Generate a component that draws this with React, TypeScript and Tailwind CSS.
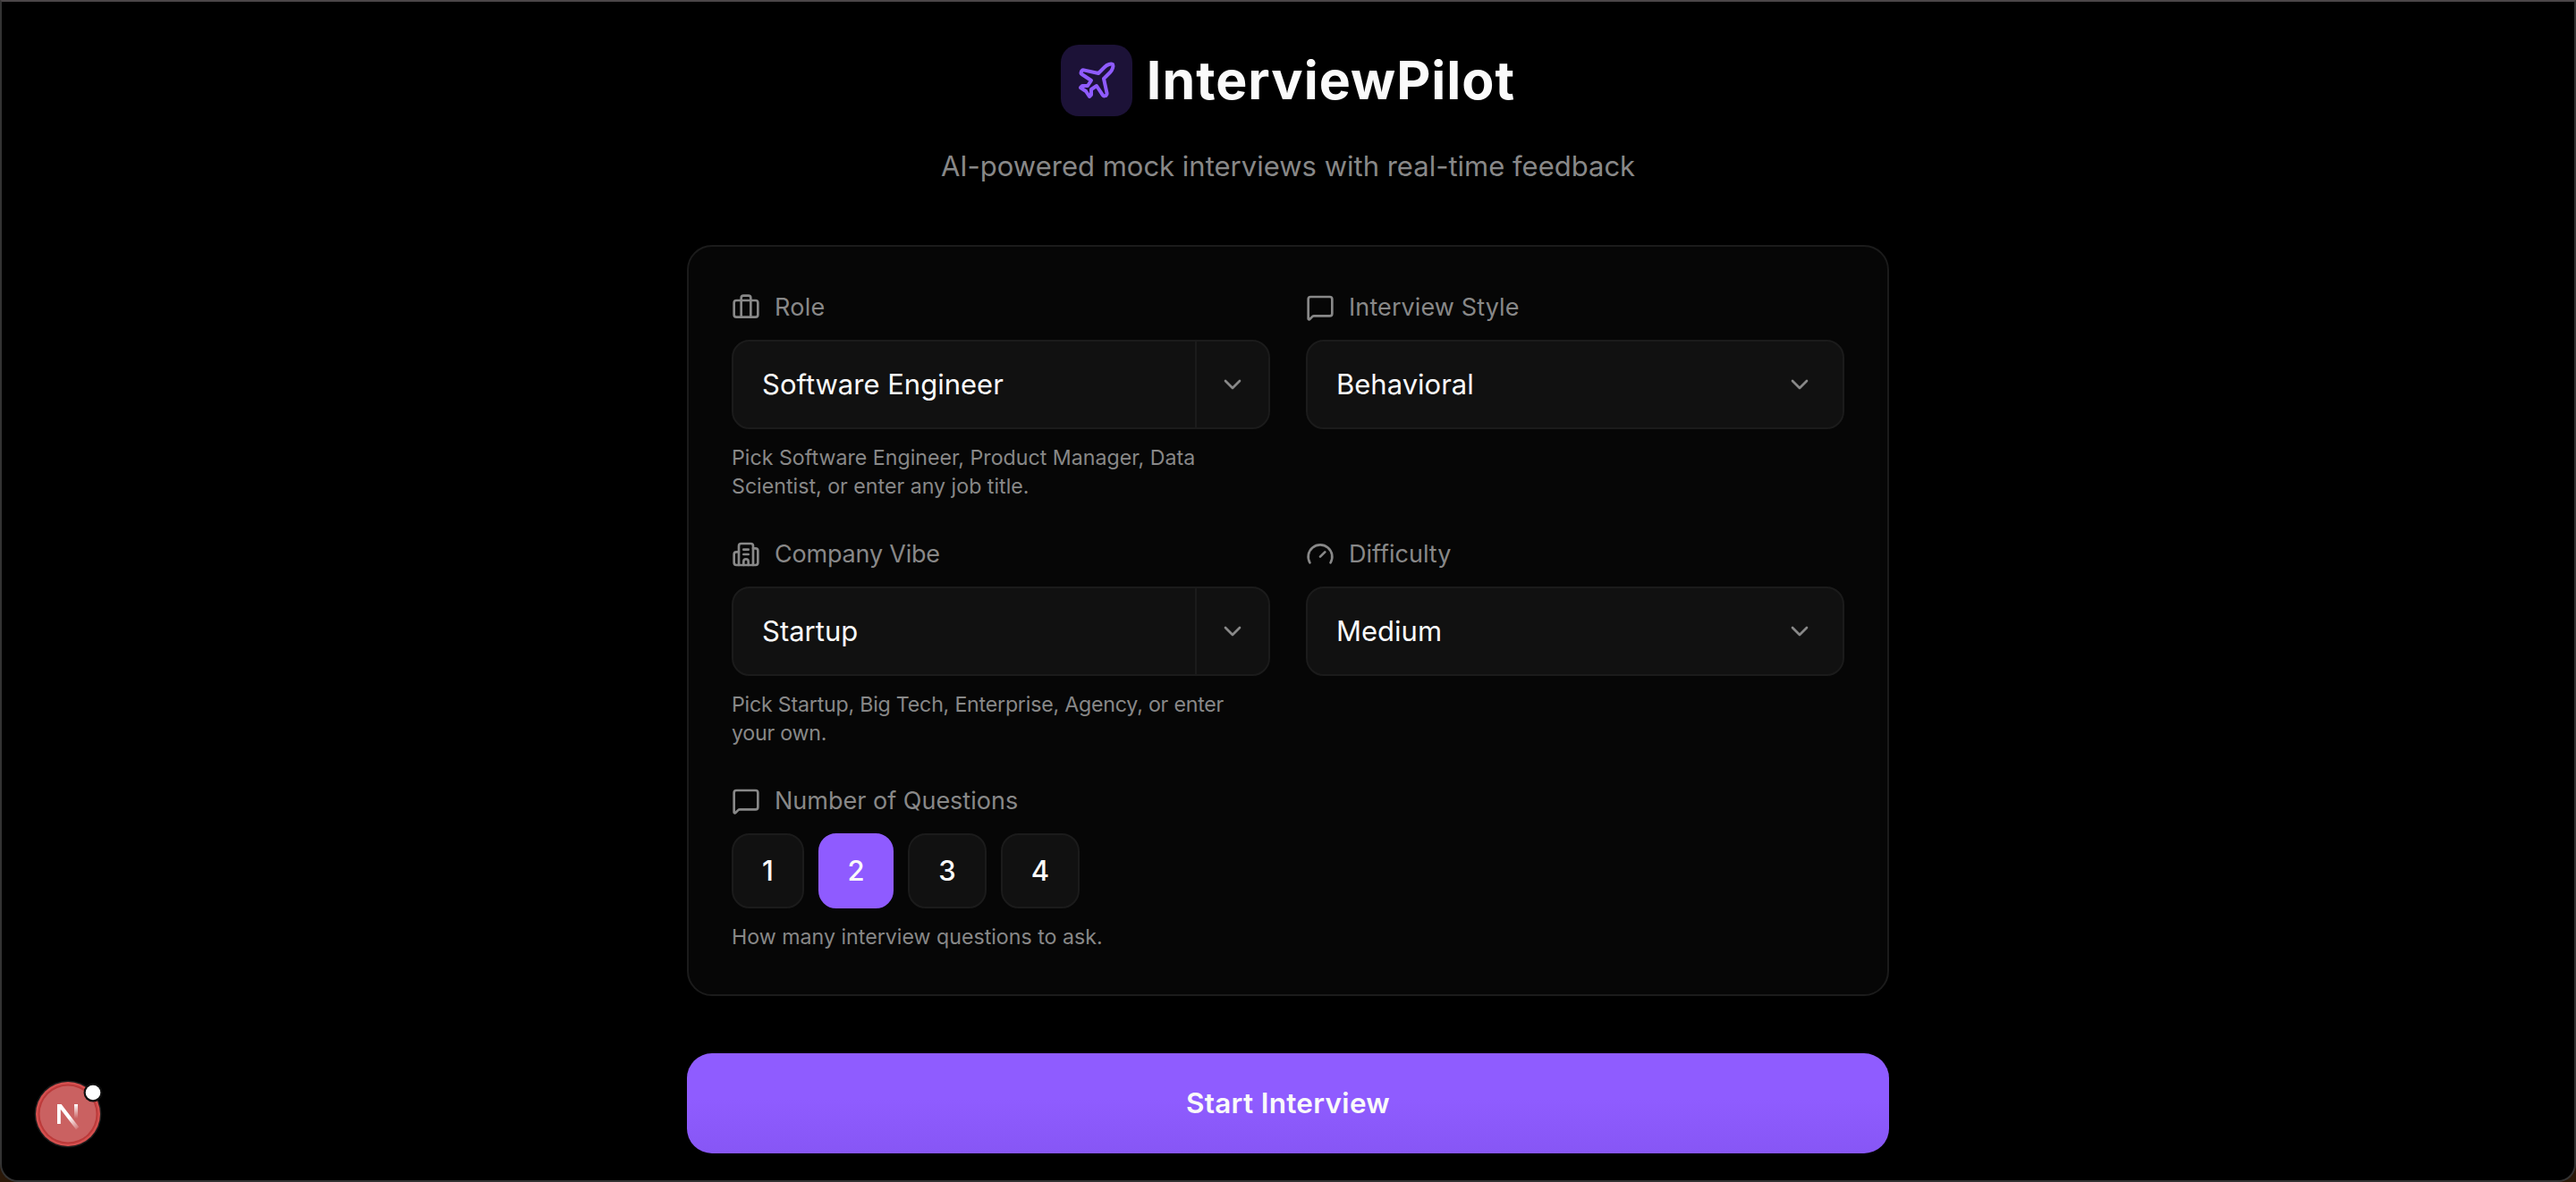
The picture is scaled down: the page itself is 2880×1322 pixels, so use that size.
import { useState, type ReactNode } from 'react';
import { Briefcase, Building2, ChevronDown, Gauge, MessageSquare, Plane, type LucideIcon } from 'lucide-react';

const QUESTION_COUNTS = [
  { value: 1, width: 'w-[81px]' },
  { value: 2, width: 'w-[84px]' },
  { value: 3, width: 'w-[88px]' },
  { value: 4, width: 'w-[88px]' },
];

interface FieldProps {
  icon: LucideIcon;
  label: string;
  labelClass?: string;
  help?: string;
  helpClass?: string;
  children: ReactNode;
}

function Field({ icon: Icon, label, labelClass = '', help, helpClass = '', children }: FieldProps) {
  return (
    <div className="flex flex-col gap-4">
      <div className="flex h-10 items-center gap-4 text-[27px] leading-10 text-[#888888]">
        <Icon size={32} />
        <span className={labelClass}>{label}</span>
      </div>
      {children}
      {help && <p className={`text-[23.2px] leading-8 text-[#888888] ${helpClass}`}>{help}</p>}
    </div>
  );
}

function Combobox({ value }: { value: string }) {
  return (
    <div className="flex h-[100px] overflow-hidden rounded-[20px] border-2 border-[#1b1b1b] bg-[#111111]">
      <div className="flex flex-1 items-center px-8 text-[31px] text-[#fafafa]">{value}</div>
      <button className="flex w-[82px] items-center justify-center border-l-2 border-[#1b1b1b] text-[#888888]">
        <ChevronDown size={32} />
      </button>
    </div>
  );
}

function Select({ value }: { value: string }) {
  return (
    <button className="flex h-[100px] items-center justify-between rounded-[20px] border-2 border-[#1b1b1b] bg-[#111111] px-8 text-[31px] text-[#fafafa]">
      <span>{value}</span>
      <ChevronDown size={32} className="text-[#888888]" />
    </button>
  );
}

function DevBadge() {
  return (
    <svg className="absolute bottom-[34px] left-9" width="80" height="80" viewBox="0 0 80 80" fill="none">
      <defs>
        <linearGradient id="diagonal" x1="41" y1="43" x2="51" y2="58" gradientUnits="userSpaceOnUse">
          <stop stopColor="#fff" />
          <stop offset="1" stopColor="#fff" stopOpacity="0" />
        </linearGradient>
        <linearGradient id="stem" x1="47" y1="29" x2="47" y2="45" gradientUnits="userSpaceOnUse">
          <stop stopColor="#fff" />
          <stop offset="1" stopColor="#fff" stopOpacity="0" />
        </linearGradient>
      </defs>
      <circle cx="38" cy="40" r="37.5" fill="#1c1c1c" />
      <circle cx="38" cy="40" r="36" fill="#d5504f" />
      <circle cx="38" cy="40" r="33.5" fill="#bc3a3a" />
      <circle cx="38" cy="40" r="31.5" fill="#ca6161" />
      <path d="M26 29h4.6l19.6 25.6-3.2 2.6L29.8 34.8V51H26z" fill="url(#diagonal)" />
      <path d="M45 29h4v16h-4z" fill="url(#stem)" />
      <circle cx="66" cy="16" r="10.5" fill="#101010" />
      <circle cx="66" cy="16" r="8.3" fill="#fff" />
    </svg>
  );
}

export default function App() {
  const [count, setCount] = useState(2);

  return (
    <div className="h-[1322px] w-full overflow-hidden bg-[#2a1808] font-['Inter',sans-serif]">
      <div className="relative h-full rounded-b-[20px] border-2 border-[#333333] border-t-[#4b4648] bg-black pt-12">
        <main className="mx-auto flex w-[1344px] flex-col">
          <div className="flex h-20 items-center justify-center gap-4">
            <div className="flex size-20 items-center justify-center rounded-[20px] bg-[#1c1237] text-[#8f5bff]">
              <Plane size={48} />
            </div>
            <h1 className="text-[59px] leading-20 font-bold tracking-[1px] text-[#fafafa]">InterviewPilot</h1>
          </div>
          <p className="mt-8 text-center text-[31px] leading-12 text-[#888888]">
            AI-powered mock interviews with real-time feedback
          </p>

          <section className="mt-16 flex flex-col gap-10 rounded-[28px] border-2 border-[#1b1b1b] bg-[#060606] p-12">
            <div className="grid grid-cols-2 gap-10">
              <Field
                icon={Briefcase}
                label="Role"
                labelClass="tracking-[0.3px]"
                help="Pick Software Engineer, Product Manager, Data Scientist, or enter any job title."
              >
                <Combobox value="Software Engineer" />
              </Field>
              <Field icon={MessageSquare} label="Interview Style" labelClass="tracking-[0.1px]">
                <Select value="Behavioral" />
              </Field>
              <Field
                icon={Building2}
                label="Company Vibe"
                labelClass="tracking-[-0.2px]"
                help="Pick Startup, Big Tech, Enterprise, Agency, or enter your own."
                helpClass="tracking-[-0.22px]"
              >
                <Combobox value="Startup" />
              </Field>
              <Field icon={Gauge} label="Difficulty">
                <Select value="Medium" />
              </Field>
            </div>

            <Field icon={MessageSquare} label="Number of Questions" help="How many interview questions to ask.">
              <div className="flex gap-4">
                {QUESTION_COUNTS.map(({ value, width }) => (
                  <button
                    key={value}
                    onClick={() => setCount(value)}
                    className={`h-[84px] rounded-[20px] border-2 text-[31px] font-medium text-[#fafafa] ${width} ${
                      value === count ? 'border-[#8f5bff] bg-[#8f5bff]' : 'border-[#1b1b1b] bg-[#111111]'
                    }`}
                  >
                    {value}
                  </button>
                ))}
              </div>
            </Field>
          </section>

          <button className="mt-16 h-28 rounded-[28px] bg-linear-to-b from-[#8f5cff] from-45% to-[#8756f5] text-[31.5px] font-semibold tracking-[0.3px] text-[#fafafa]">
            Start Interview
          </button>
        </main>
        <DevBadge />
      </div>
    </div>
  );
}
